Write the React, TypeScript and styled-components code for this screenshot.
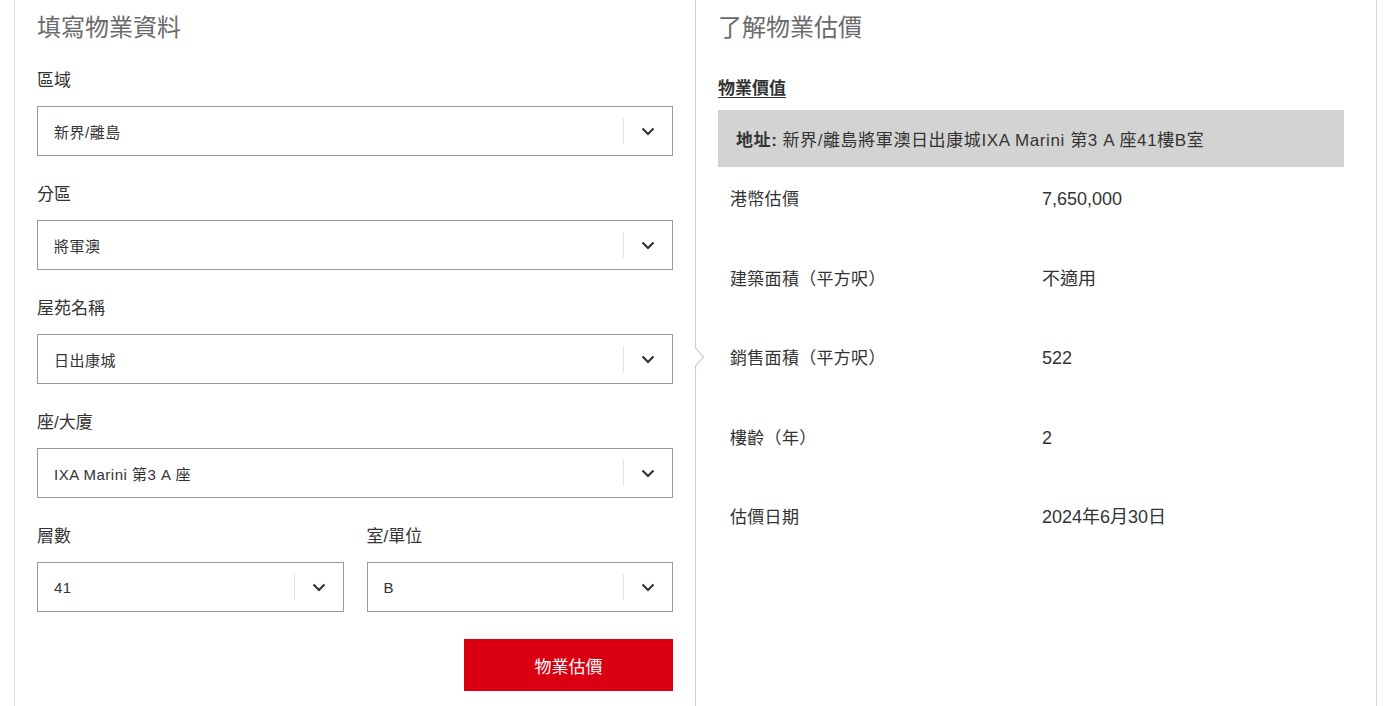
import React from 'react'
import styled, { createGlobalStyle } from 'styled-components'

const GlobalStyle = createGlobalStyle`
  html, body {
    margin: 0;
    padding: 0;
    background: #fff;
  }
  body {
    font-family: "Liberation Sans", "Noto Sans CJK TC", sans-serif;
    color: #333;
  }
`

const Page = styled.div`
  display: flex;
  align-items: stretch;
  padding-left: 14px;
  height: 706px;
  overflow: hidden;
`

const FormPanel = styled.section`
  width: 636px;
  flex-shrink: 0;
  padding: 12px 22px 0 22px;
  border-left: 1px solid #dcdcdc;
`

const ResultPanel = styled.section`
  position: relative;
  width: 626px;
  flex-shrink: 0;
  padding: 12px 32px 0 22px;
  border-left: 1px solid #d0d0d0;
  border-right: 1px solid #d6d6d6;
`

const Notch = styled.svg`
  position: absolute;
  left: -2px;
  top: 344px;
  width: 12px;
  height: 26px;
`

const PanelTitle = styled.h2`
  margin: 0;
  font-size: 24px;
  line-height: 32px;
  font-weight: 400;
  color: #6a6a6a;
`

const FieldList = styled.div`
  display: flex;
  flex-direction: column;
  gap: 25px;
  margin-top: 23px;
`

const FieldRow = styled.div`
  display: grid;
  grid-template-columns: 1fr 1fr;
  column-gap: 23px;
`

const Field = styled.div`
  display: flex;
  flex-direction: column;
`

const Label = styled.label`
  font-size: 17px;
  line-height: 24px;
  color: #333;
  padding-top: 2px;
  margin-bottom: 13px;
`

const SelectBox = styled.div`
  display: flex;
  align-items: center;
  height: 50px;
  box-sizing: border-box;
  border: 1px solid #9a9a9a;
  background: #fff;
`

const SelectValue = styled.span`
  flex: 1;
  padding-left: 16px;
  font-size: 15px;
  letter-spacing: 0.5px;
  color: #333;
`

const Indicator = styled.span`
  display: flex;
  align-items: center;
  justify-content: center;
  width: 48px;
  height: 26px;
  border-left: 1px solid #e2e2e2;
`

const Actions = styled.div`
  display: flex;
  justify-content: flex-end;
  margin-top: 27px;
`

const SubmitButton = styled.button`
  width: 209px;
  height: 52px;
  border: 0;
  background: #db0011;
  color: #fff;
  font-family: inherit;
  font-size: 17px;
  cursor: pointer;
`

const SectionHeading = styled.h3`
  margin: 33px 0 0 0;
  font-size: 17px;
  line-height: 24px;
  font-weight: 700;
  color: #333;
  text-decoration: underline;
  text-underline-offset: 3px;
`

const AddressBar = styled.div`
  margin-top: 9px;
  height: 57px;
  display: flex;
  align-items: center;
  padding-left: 18px;
  background: #d3d3d3;
  font-size: 17px;
  letter-spacing: 0.6px;
  color: #333;
`

const Strong = styled.b`
  font-weight: 700;
  margin-right: 5px;
`

const ValueRow = styled.div`
  display: grid;
  grid-template-columns: 312px 1fr;
  align-items: baseline;
  box-sizing: border-box;
  height: 79.5px;
  padding: 20px 12px 0 12px;
  line-height: 24px;
  color: #333;
`

const RowLabel = styled.span`
  font-size: 17px;
  letter-spacing: 0.3px;
`

const RowValue = styled.span`
  font-size: 18px;
`

function Chevron() {
  return (
    <svg width="14" height="9" viewBox="0 0 14 9">
      <polyline points="1.5,1.5 7,7 12.5,1.5" fill="none" stroke="#333" strokeWidth="2.2" />
    </svg>
  )
}

function Select({ value }: { value: string }) {
  return (
    <SelectBox>
      <SelectValue>{value}</SelectValue>
      <Indicator>
        <Chevron />
      </Indicator>
    </SelectBox>
  )
}

const FIELDS = [
  { label: '區域', value: '新界/離島' },
  { label: '分區', value: '將軍澳' },
  { label: '屋苑名稱', value: '日出康城' },
  { label: '座/大廈', value: 'IXA Marini 第3 A 座' },
]

const RESULTS = [
  { label: '港幣估價', value: '7,650,000' },
  { label: '建築面積（平方呎）', value: '不適用' },
  { label: '銷售面積（平方呎）', value: '522' },
  { label: '樓齡（年）', value: '2' },
  { label: '估價日期', value: '2024年6月30日' },
]

export default function App() {
  return (
    <>
      <GlobalStyle />
      <Page>
        <FormPanel>
          <PanelTitle>填寫物業資料</PanelTitle>
          <FieldList>
            {FIELDS.map((f) => (
              <Field key={f.label}>
                <Label>{f.label}</Label>
                <Select value={f.value} />
              </Field>
            ))}
            <FieldRow>
              <Field>
                <Label>層數</Label>
                <Select value="41" />
              </Field>
              <Field>
                <Label>室/單位</Label>
                <Select value="B" />
              </Field>
            </FieldRow>
          </FieldList>
          <Actions>
            <SubmitButton>物業估價</SubmitButton>
          </Actions>
        </FormPanel>
        <ResultPanel>
          <Notch viewBox="0 0 12 26">
            <rect x="0" y="0" width="4" height="26" fill="#fff" />
            <polyline points="1.5,0 1.5,4 9.5,13 1.5,22 1.5,26" fill="none" stroke="#d0d0d0" strokeWidth="1.3" />
          </Notch>
          <PanelTitle>了解物業估價</PanelTitle>
          <SectionHeading>物業價值</SectionHeading>
          <AddressBar>
            <Strong>地址:</Strong>
            新界/離島將軍澳日出康城IXA Marini 第3 A 座41樓B室
          </AddressBar>
          {RESULTS.map((r) => (
            <ValueRow key={r.label}>
              <RowLabel>{r.label}</RowLabel>
              <RowValue>{r.value}</RowValue>
            </ValueRow>
          ))}
        </ResultPanel>
      </Page>
    </>
  )
}
